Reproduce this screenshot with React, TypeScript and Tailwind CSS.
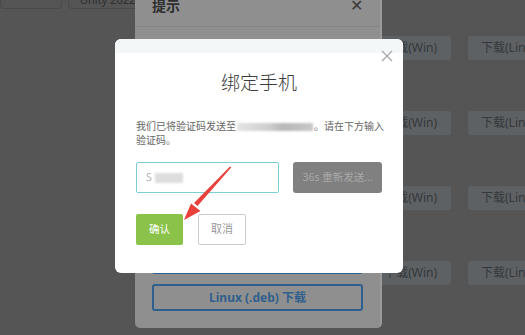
const font = { fontFamily: '"Noto Sans", "Noto Sans CJK SC", sans-serif' };

function DownloadRow() {
  return (
    <div className="grid grid-cols-[81px_84px] gap-x-[17px] ml-[370px] w-[182px]">
      <div className="h-[24px] rounded-[3px] bg-[#5e6163] text-[#34383b] text-[12px] leading-[24px] pr-[14px] text-right whitespace-nowrap">
        下载(Win)
      </div>
      <div className="h-[24px] rounded-[3px] bg-[#5e6163] text-[#34383b] text-[12px] leading-[24px] pl-[13px] whitespace-nowrap">
        下载(Linux)
      </div>
    </div>
  );
}

export default function App() {
  return (
    <div className="relative w-[525px] h-[335px] overflow-hidden bg-[#555555]" style={font}>
      {/* page behind the overlay */}
      <div className="flex flex-col">
        <div className="flex gap-[6px] -mt-[16px]">
          <div className="w-[62px] h-[25px] rounded-[4px] border border-[#4a4a4a]" />
          <div className="w-[90px] h-[25px] rounded-[4px] border border-[#4a4a4a] px-[11px] text-[11px] leading-[30px] text-[#2f2f2f] overflow-hidden whitespace-nowrap">
            Unity 2022.3
          </div>
        </div>
        <div className="flex flex-col gap-[51px] mt-[27px]">
          <DownloadRow />
          <DownloadRow />
          <DownloadRow />
          <DownloadRow />
        </div>
      </div>

      {/* 提示 dialog */}
      <div className="absolute left-[135px] -top-[10px] w-[247px] h-[338px] rounded-[5px] bg-[#8f8f8f] border-r-2 border-[#9a9a9a] flex flex-col">
        <div className="h-[37px] shrink-0 border-b border-[#858585] flex items-end justify-between px-[17px] pb-[13px]">
          <span className="text-[14px] font-bold text-[#2e2e2e] leading-none">提示</span>
          <span className="text-[16px] text-[#3a3a3a] leading-none">✕</span>
        </div>
        <div className="flex-1 flex flex-col justify-end gap-[10px] px-[17px] pb-[17px]">
          <div className="h-[27px] rounded-[3px] border-2 border-[#2f5f8c]" />
          <div className="h-[27px] rounded-[3px] border-2 border-[#2f5f8c] flex items-center justify-center text-[12px] font-bold text-[#2f5f8c]">
            Linux (.deb) 下载
          </div>
        </div>
      </div>

      {/* 绑定手机 dialog */}
      <div className="absolute left-[115px] top-[39px] w-[288px] h-[234px] rounded-[6px] bg-white overflow-hidden flex flex-col">
        <div className="h-[14px] bg-[#f3f7f8] shrink-0" />
        <div className="relative flex-1 px-[21px]">
          <svg className="absolute right-[10px] top-[-3px]" width="12" height="12" viewBox="0 0 12 12">
            <path d="M1 1 L11 11 M11 1 L1 11" stroke="#a8a8a8" strokeWidth="1.3" />
          </svg>
          <div className="text-center text-[19px] font-light text-[#3c3c3c] mt-[17px] leading-[26px]">绑定手机</div>
          <div className="mt-[23px] text-[10px] leading-[14px] text-[#666666]">
            <div className="whitespace-nowrap">
              我们已将验证码发送至
              <span className="inline-block align-middle w-[76px] h-[8px] mx-[1px] blur-[1px] bg-[linear-gradient(90deg,#e4e4e4_0%,#cfcfcf_40%,#b8b8b8_60%,#c8c8c8_100%)]" />
              。请在下方输入
            </div>
            <div>验证码。</div>
          </div>
          <div className="flex gap-[14px] mt-[15px]">
            <div className="w-[143px] h-[31px] border border-[#7ccfd9] rounded-[2px] flex items-center pl-[9px] gap-[3px]">
              <span className="text-[11px] text-[#b0b0b0] blur-[0.6px]">S</span>
              <span className="w-[28px] h-[10px] bg-[#dedede] blur-[1px]" />
            </div>
            <div className="w-[89px] h-[31px] rounded-[3px] bg-[#808080] text-[#a9a9a9] text-[10.5px] flex items-center justify-center">
              36s 重新发送...
            </div>
          </div>
          <div className="flex gap-[15px] mt-[21px]">
            <div className="w-[47px] h-[31px] rounded-[2px] bg-[#8bc34a] text-white text-[10.5px] flex items-center justify-center">
              确认
            </div>
            <div className="w-[48px] h-[31px] rounded-[2px] border border-[#cccccc] text-[#999999] text-[11px] flex items-center justify-center">
              取消
            </div>
          </div>
        </div>
      </div>

      {/* red annotation arrow */}
      <svg className="absolute left-0 top-0 pointer-events-none" width="525" height="335" viewBox="0 0 525 335">
        <path d="M230 166.5 L231.2 167.6 L197.5 206 L194 203 Z" fill="#e8403a" />
        <path d="M184 220 L191 203.5 L200.5 211 Z" fill="#e8403a" />
      </svg>
    </div>
  );
}
